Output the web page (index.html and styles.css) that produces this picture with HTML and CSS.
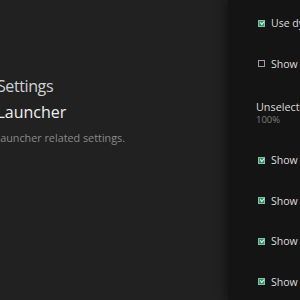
FILE: index.html
```html
<!DOCTYPE html>
<html>
<head>
<meta charset="utf-8">
<link rel="stylesheet" href="styles.css">
</head>
<body>
<div class="screen">
  <div class="intro">
    <div class="crumb">Settings</div>
    <div class="title">Launcher</div>
    <div class="desc">Launcher related settings.</div>
  </div>
  <div class="panel">
    <div class="row"><span class="box on"></span><span class="label">Use dynamic colors</span></div>
    <div class="row"><span class="box"></span><span class="label">Show app labels</span></div>
    <div class="slider">
      <div class="label">Unselected opacity</div>
      <div class="value">100%</div>
    </div>
    <div class="row"><span class="box on"></span><span class="label">Show clock</span></div>
    <div class="row"><span class="box on"></span><span class="label">Show battery</span></div>
    <div class="row"><span class="box on"></span><span class="label">Show network</span></div>
    <div class="row"><span class="box on"></span><span class="label">Show notifications</span></div>
  </div>
</div>
</body>
</html>
```
FILE: styles.css
```css
html, body {
  margin: 0;
  padding: 0;
  background: #212121;
}
body {
  width: 300px;
  height: 300px;
  overflow: hidden;
  font-family: "Open Sans", "Noto Sans", sans-serif;
}
.screen {
  display: flex;
  width: 300px;
  height: 300px;
}
.intro {
  width: 228px;
  flex: none;
  padding-top: 75px;
  white-space: nowrap;
}
.crumb {
  margin-left: -3px;
  font-size: 16px;
  line-height: 22px;
  letter-spacing: -0.4px;
  color: #d2d2d2;
}
.title {
  margin-left: -3.6px;
  margin-top: 4px;
  font-size: 16px;
  line-height: 22px;
  color: #efefef;
}
.desc {
  margin-left: -5.5px;
  margin-top: 8px;
  font-size: 10.8px;
  line-height: 14px;
  color: #8a8a8a;
}
.panel {
  flex: 1;
  min-width: 0;
  background: #141414;
  box-shadow: -4px 0 8px rgba(0, 0, 0, 0.35);
  padding: 3px 0 0 30px;
  overflow: hidden;
  white-space: nowrap;
}
.row {
  height: 40.5px;
  display: flex;
  align-items: center;
  gap: 6px;
}
.label {
  font-size: 10.5px;
  line-height: 14px;
  color: #dcdcdc;
}
.box {
  width: 7px;
  height: 7px;
  box-sizing: border-box;
  border: 1px solid #a0a0a0;
  flex: none;
  position: relative;
}
.box.on {
  border-color: #7cc3a5;
  background: #3c8b6b;
}
.box.on::after {
  content: "";
  position: absolute;
  left: 1px;
  top: 0px;
  width: 3px;
  height: 1.5px;
  border-left: 1px solid #e6f5ee;
  border-bottom: 1px solid #e6f5ee;
  transform: rotate(-45deg);
}
.slider {
  height: 56px;
  box-sizing: border-box;
  padding-top: 16px;
  margin-left: -2px;
}
.slider .label {
  font-size: 10.8px;
}
.slider .value {
  margin-top: 0;
  font-size: 9.5px;
  line-height: 12px;
  color: #7e7e7e;
}
```
